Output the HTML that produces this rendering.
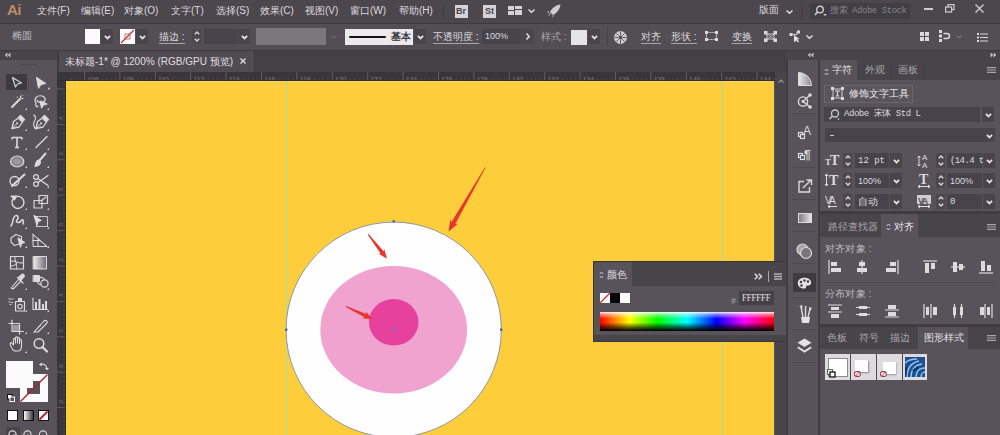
<!DOCTYPE html>
<html><head><meta charset="utf-8">
<style>
*{margin:0;padding:0;box-sizing:border-box}
html,body{width:1000px;height:435px;overflow:hidden;background:#58535a;font-family:"Liberation Sans",sans-serif;color:#dcdadd;position:relative}
.a{position:absolute}
.t{position:absolute;white-space:nowrap;font-size:10px;line-height:10px}
.m{font-family:"Liberation Mono",monospace}
.ul{border-bottom:1px solid #a9a6aa}
.chev{position:absolute;width:12px;height:15px;background:#48444a}
.inp{position:absolute;background:#47434a}
.spin{position:absolute;width:9px;height:15px;background:#4b474d}
svg{position:absolute;overflow:visible}
</style></head><body>
<!-- ================= MENU BAR ================= -->
<div class="a" style="left:0;top:0;width:1000px;height:23px;background:#4b474d"></div>
<div class="a" style="left:0;top:23px;width:1000px;height:1px;background:#3c393e"></div>
<div class="t" style="left:7px;top:2px;font-size:15px;line-height:16px;color:#c08a66;font-weight:bold;letter-spacing:-0.5px">Ai</div>
<div class="t" style="left:37px;top:6px">文件(F)</div>
<div class="t" style="left:81px;top:6px">编辑(E)</div>
<div class="t" style="left:124px;top:6px">对象(O)</div>
<div class="t" style="left:171px;top:6px">文字(T)</div>
<div class="t" style="left:216px;top:6px">选择(S)</div>
<div class="t" style="left:260px;top:6px">效果(C)</div>
<div class="t" style="left:305px;top:6px">视图(V)</div>
<div class="t" style="left:350px;top:6px">窗口(W)</div>
<div class="t" style="left:399px;top:6px">帮助(H)</div>
<div class="a" style="left:443px;top:3px;width:1px;height:17px;background:#433f45"></div>
<div class="a" style="left:455px;top:5px;width:13px;height:13px;background:#d6d3d7"></div>
<div class="t" style="left:456px;top:7px;font-size:9px;line-height:9px;color:#4a464c;font-weight:bold">Br</div>
<div class="a" style="left:483px;top:5px;width:13px;height:13px;background:#d6d3d7"></div>
<div class="t" style="left:485px;top:7px;font-size:9px;line-height:9px;color:#4a464c;font-weight:bold">St</div>
<svg style="left:508px;top:6px" width="15" height="9"><rect x="0" y="0" width="6" height="4" fill="#d6d3d7"/><rect x="0" y="5" width="6" height="4" fill="#d6d3d7"/><rect x="7" y="0" width="7" height="3" fill="#d6d3d7"/><rect x="7" y="4" width="7" height="5" fill="#d6d3d7"/></svg>
<svg style="left:528px;top:9px" width="7" height="4"><path d="M0.5 0.5 L3.5 3.2 L6.5 0.5" stroke="#e0dee1" stroke-width="1.5" fill="none"/></svg>
<svg style="left:547px;top:4px" width="14" height="13"><path d="M13.5 0.5 C9 1 5 4 3 8 L6 11 C10 9 13 5 13.5 0.5Z M2 7 L0 8 L2 9Z M5 12 L6 13 L7 11Z M3 9 L1 12 L4 10Z" fill="#cfccd0"/></svg>
<div class="t" style="left:759px;top:5px">版面</div>
<svg style="left:786px;top:10px" width="7" height="4"><path d="M0.5 0.5 L3.5 3.2 L6.5 0.5" stroke="#e0dee1" stroke-width="1.5" fill="none"/></svg>
<div class="a" style="left:802px;top:3px;width:1px;height:17px;background:#433f45"></div>
<div class="a" style="left:810px;top:3px;width:100px;height:16px;background:#423f44;border-radius:2px"></div>
<svg style="left:814px;top:5px" width="13" height="12"><circle cx="6" cy="4.5" r="3.3" stroke="#cfccd0" stroke-width="1.4" fill="none"/><path d="M3.5 7 L1 10" stroke="#cfccd0" stroke-width="1.6"/><path d="M9 9 L11 11 L13 9Z" fill="#cfccd0"/></svg>
<div class="t m" style="left:830px;top:6px;font-size:9px;line-height:10px;letter-spacing:-0.45px;color:#858287">搜索 Adobe Stock</div>
<div class="a" style="left:924px;top:8px;width:9px;height:2px;background:#d0cdd1"></div>
<svg style="left:945px;top:4px" width="10" height="9"><rect x="3" y="0.6" width="6" height="5" stroke="#d0cdd1" stroke-width="1.2" fill="none"/><rect x="0.6" y="3" width="6" height="5" stroke="#d0cdd1" stroke-width="1.2" fill="#4b474d"/></svg>
<svg style="left:975px;top:4px" width="9" height="9"><path d="M0.5 0.5 L8.5 8.5 M8.5 0.5 L0.5 8.5" stroke="#d0cdd1" stroke-width="1.4"/></svg>

<!-- ================= CONTROL BAR ================= -->
<div class="a" style="left:0;top:24px;width:1000px;height:26px;background:#524e54"></div>
<div class="a" style="left:0;top:50px;width:1000px;height:1px;background:#3d3a3f"></div>

<div class="t" style="left:12px;top:31px;color:#bcb9bd">椭圆</div>
<div class="a" style="left:85px;top:29px;width:15px;height:15px;background:#fbfbfb"></div>
<div class="chev" style="left:101px;top:29px"><svg style="left:2.5px;top:5.5px" width="7" height="5"><path d="M0.9 0.9 L3.5 3.4 L6.1 0.9" stroke="#e4e2e5" stroke-width="1.8" fill="none"/></svg></div>
<div class="a" style="left:120px;top:29px;width:15px;height:15px;background:#fbfbfb"></div>
<svg style="left:120px;top:29px" width="15" height="15"><path d="M1 14 L14 1" stroke="#c0302e" stroke-width="1.3"/><rect x="5" y="5" width="5" height="5" fill="none" stroke="#b25a5a" stroke-width="0.8"/></svg>
<div class="chev" style="left:136px;top:29px"><svg style="left:2.5px;top:5.5px" width="7" height="5"><path d="M0.9 0.9 L3.5 3.4 L6.1 0.9" stroke="#e4e2e5" stroke-width="1.8" fill="none"/></svg></div>
<div class="t ul" style="left:159px;top:32px;padding-bottom:1px">描边 :</div>
<div class="spin" style="left:192px;top:29px"><svg style="left:1.5px;top:2px" width="6" height="11"><path d="M0.8 3.2 L3 1 L5.2 3.2 M0.8 7.8 L3 10 L5.2 7.8" stroke="#d8d6d9" stroke-width="1.5" fill="none"/></svg></div>
<div class="inp" style="left:204px;top:29px;width:33px;height:15px"></div>
<div class="chev" style="left:238px;top:29px"><svg style="left:2.5px;top:5.5px" width="7" height="5"><path d="M0.9 0.9 L3.5 3.4 L6.1 0.9" stroke="#e4e2e5" stroke-width="1.8" fill="none"/></svg></div>
<div class="a" style="left:256px;top:28px;width:70px;height:17px;background:#7b777d"></div>
<svg style="left:330px;top:35px" width="7" height="4"><path d="M0.5 0.5 L3.5 3.2 L6.5 0.5" stroke="#68646a" stroke-width="1.2" fill="none"/></svg>
<div class="a" style="left:345px;top:29px;width:68px;height:15.5px;background:#ebe9ec"></div>
<div class="a" style="left:349px;top:35.5px;width:37px;height:2.6px;background:#111;border-radius:1px"></div>
<div class="t" style="left:391px;top:32px;font-family:'Liberation Serif',serif;color:#3a383b;font-size:9.5px;line-height:10px;font-weight:bold">基本</div>
<div class="chev" style="left:414px;top:29px"><svg style="left:2.5px;top:5.5px" width="7" height="5"><path d="M0.9 0.9 L3.5 3.4 L6.1 0.9" stroke="#e4e2e5" stroke-width="1.8" fill="none"/></svg></div>
<div class="t ul" style="left:433px;top:32px;padding-bottom:1px">不透明度 :</div>
<div class="inp" style="left:482px;top:29px;width:39px;height:15px"></div>
<div class="t" style="left:485px;top:32px;font-size:9px;line-height:9px">100%</div>
<div class="a" style="left:522px;top:29px;width:12px;height:15px;background:#4b474d"></div>
<svg style="left:526px;top:33px" width="4" height="7"><path d="M0.5 0.5 L3.2 3.5 L0.5 6.5" stroke="#e0dee1" stroke-width="1.5" fill="none"/></svg>
<div class="t" style="left:541px;top:32px;color:#a9a6aa">样式 :</div>
<div class="a" style="left:571px;top:30px;width:16px;height:15px;background:#e6e3e8"></div>
<div class="chev" style="left:588px;top:29px"><svg style="left:2.5px;top:5.5px" width="7" height="5"><path d="M0.9 0.9 L3.5 3.4 L6.1 0.9" stroke="#e4e2e5" stroke-width="1.8" fill="none"/></svg></div>
<div class="a" style="left:607px;top:27px;width:1px;height:19px;background:#46434a"></div>
<svg style="left:613px;top:30px" width="15" height="15"><circle cx="7.5" cy="7.5" r="6.5" fill="#cfccd0"/><circle cx="7.5" cy="7.5" r="2" fill="#524e54"/><path d="M7.5 1.5 V5 M7.5 10 V13.5 M1.5 7.5 H5 M10 7.5 H13.5 M3.3 3.3 L5.8 5.8 M9.2 9.2 L11.7 11.7 M11.7 3.3 L9.2 5.8 M5.8 9.2 L3.3 11.7" stroke="#524e54" stroke-width="0.9"/></svg>
<div class="t ul" style="left:641px;top:32px;padding-bottom:1px">对齐</div>
<div class="t ul" style="left:671px;top:32px;padding-bottom:1px">形状 :</div>
<svg style="left:705px;top:31px" width="13" height="10"><rect x="1.5" y="1.5" width="10" height="7" fill="none" stroke="#cfccd0" stroke-width="1.2" stroke-dasharray="2 1"/><rect x="0" y="0" width="3" height="3" fill="#dcdadd"/><rect x="10" y="0" width="3" height="3" fill="#dcdadd"/><rect x="0" y="7" width="3" height="3" fill="#dcdadd"/><rect x="10" y="7" width="3" height="3" fill="#dcdadd"/></svg>
<div class="t ul" style="left:732px;top:32px;padding-bottom:1px">变换</div>
<svg style="left:764px;top:31px" width="13" height="11"><path d="M3 3 L10 8 M10 3 L3 8" stroke="#cfccd0" stroke-width="0.8"/><rect x="3" y="3" width="7" height="5" fill="none" stroke="#cfccd0" stroke-width="1"/><rect x="0" y="0" width="3.5" height="3.5" fill="#dcdadd"/><rect x="9.5" y="0" width="3.5" height="3.5" fill="#dcdadd"/><rect x="0" y="7.5" width="3.5" height="3.5" fill="#dcdadd"/><rect x="9.5" y="7.5" width="3.5" height="3.5" fill="#dcdadd"/></svg>
<svg style="left:789px;top:30px" width="13" height="13"><rect x="0.5" y="3" width="3" height="3" fill="#dcdadd"/><rect x="8" y="0.5" width="3" height="3" fill="#dcdadd"/><path d="M3 4.5 H8 V2" stroke="#cfccd0" stroke-width="1" fill="none"/><path d="M5 5 L5 12.5 L7 10.5 L9 12.5 L10 11.5 L8 9.5 L10.5 9 Z" fill="#e4e2e5"/></svg>
<svg style="left:806px;top:35px" width="7" height="4"><path d="M0.5 0.5 L3.5 3.2 L6.5 0.5" stroke="#e0dee1" stroke-width="1.5" fill="none"/></svg>
<svg style="left:920px;top:32px" width="9" height="9"><rect x="0" y="0" width="4" height="4" fill="#dcdadd"/><rect x="5" y="0" width="4" height="4" fill="#dcdadd"/><rect x="0" y="5" width="4" height="4" fill="#dcdadd"/><rect x="5" y="5" width="4" height="4" fill="#dcdadd"/></svg>
<svg style="left:939px;top:30px" width="12" height="12"><rect x="0" y="0" width="3" height="3" fill="#dcdadd"/><rect x="0" y="4.5" width="3" height="3" fill="#dcdadd"/><rect x="0" y="9" width="3" height="3" fill="#dcdadd"/><path d="M4.5 3.5 H8 A2.5 2.5 0 0 1 8 8.5 H4.5" stroke="#dcdadd" stroke-width="1.4" fill="none"/></svg>
<svg style="left:956px;top:35px" width="6" height="4"><path d="M0.5 0.5 L3 3 L5.5 0.5" stroke="#767278" stroke-width="1.2" fill="none"/></svg>
<svg style="left:977px;top:33px" width="11" height="9"><rect x="0" y="0" width="2" height="2" fill="#dcdadd"/><rect x="0" y="3.5" width="2" height="2" fill="#dcdadd"/><rect x="0" y="7" width="2" height="2" fill="#dcdadd"/><path d="M3 1 H11 M3 4.5 H11 M3 8 H11" stroke="#dcdadd" stroke-width="1.2"/></svg>

<!-- ================= LEFT TOOLBAR ================= -->
<div class="a" style="left:0;top:51px;width:57px;height:9px;background:#47444a"></div>
<svg style="left:5px;top:53px" width="6" height="4"><path d="M2.5 0.5 L0.8 2 L2.5 3.5 M5.5 0.5 L3.8 2 L5.5 3.5" stroke="#d6d4d7" stroke-width="1.3" fill="none"/></svg>
<div class="a" style="left:0;top:60px;width:57px;height:375px;background:#58535a"></div>
<div class="a" style="left:20px;top:64px;width:17px;height:1px;background:#4c484e"></div>
<div class="a" style="left:57px;top:51px;width:2px;height:384px;background:#3f3c41"></div>


<!-- toolbar icons -->
<div class="a" style="left:6px;top:74px;width:21px;height:16px;background:#3e3b40"></div>
<svg style="left:0;top:0" width="57" height="435">
<g fill="none" stroke="#dcdadd" stroke-width="1.1" stroke-linejoin="round" stroke-linecap="round">
<path d="M12.5 77.5 L21.5 83 L17.5 84 L15.5 87 Z"/>
<path d="M36.5 77.5 L45.5 83.5 L41 84.5 L38.5 88 Z" fill="#dcdadd"/>
<!-- magic wand -->
<path d="M12 107 L20 99" stroke-width="2"/>
<path d="M20.5 96 V97.5 M23 98.5 H21.5 M18 98 L17 97 M22.5 95.5 L21.8 96.2" stroke-width="1"/>
<!-- lasso -->
<path d="M36 103 C33 98 38 95 42 96 C46 97 46 101 43 102 C40 103 37 102 37 100 M36 103 C35 106 37 108 38 106" stroke-width="1.2"/>
<path d="M40 101 L47 104 L43.5 105 L41.5 108 Z" fill="#dcdadd"/>
<!-- pen -->
<path d="M12 128.5 L13.5 121.5 L18.5 118 L22.5 122 L19 127 Z" stroke-width="1.3"/>
<path d="M18 117.5 L20.5 115 L25 119.5 L22.5 122 Z" fill="#dcdadd" stroke-width="0.8"/>
<path d="M12 128.5 L16.5 124" stroke-width="1"/><circle cx="17" cy="123.3" r="1" fill="#dcdadd" stroke="none"/>
<!-- curvature pen -->
<path d="M36 129 C33 127 33 123 35 120 C36 118 35 116 34 115" stroke-width="1.1"/>
<path d="M36 128.5 L37.5 121.5 L42.5 118 L46.5 122 L43 127 Z" stroke-width="1.3"/>
<path d="M42 117.5 L44.5 115 L49 119.5 L46.5 122 Z" fill="#dcdadd" stroke-width="0.8"/>
<path d="M36 128.5 L40.5 124" stroke-width="1"/><circle cx="41" cy="123.3" r="1" fill="#dcdadd" stroke="none"/>
<!-- type -->
<path d="M12 137.5 H22 M17 137.5 V147.5 M15 147.5 H19 M12 137.5 V139.5 M22 137.5 V139.5" stroke-width="1.6" stroke-linecap="butt"/>
<!-- line -->
<path d="M36 147.5 L47 136.5" stroke-width="1.3"/>
<!-- ellipse -->
<ellipse cx="17.2" cy="161.5" rx="6.6" ry="5.5" fill="#8c888e" stroke-width="1.2"/>
<ellipse cx="17.2" cy="161.5" rx="3.5" ry="2.5" fill="#9d9a9e" stroke="none"/>
<!-- brush -->
<path d="M45.5 153.5 L39 161" stroke-width="2"/>
<path d="M39 160 C36 160 35.5 163 35 166.5 C38 166 40.5 165 40.5 162 Z" fill="#dcdadd"/>
<!-- shaper -->
<circle cx="14.5" cy="181" r="4.5" stroke-width="1.3"/>
<path d="M12 186 L24.5 174.5" stroke-width="2"/>
<!-- scissors -->
<circle cx="36" cy="177" r="2.4" stroke-width="1.2"/><circle cx="36" cy="184" r="2.4" stroke-width="1.2"/>
<path d="M38 178.5 L48 185.5 M38 182.5 L48 175.5" stroke-width="1.3"/>
<!-- rotate -->
<path d="M13 199 A6 6 0 1 0 17 196.5" stroke-width="1.4"/>
<path d="M11 196 L14.5 200 L16.5 196 Z" fill="#dcdadd"/>
<!-- scale -->
<rect x="34" y="200.5" width="8" height="7.5" stroke-width="1.2"/>
<rect x="39" y="195.5" width="8.5" height="8" stroke-width="1.2"/>
<path d="M42 200 L46 197" stroke-width="1.1"/>
<!-- warp -->
<path d="M11 226 C14 222 12 218 15 216 C18 214 19 218 17 220 C15 222 19 224 21 221 C23 218 24 221 23 224" stroke-width="1.5"/>
<!-- free transform -->
<rect x="36.5" y="216.5" width="11" height="10" stroke-dasharray="1.6 1.2" stroke-width="1.1"/>
<path d="M34 215.5 L41 220.5 L38 221.5 L37 225 Z" fill="#dcdadd"/>
<!-- shape builder -->
<path d="M11 238 L16 234.5 L21.5 236.5 V243 L14.5 245.5 L11 242 Z" stroke-width="1.1"/>
<path d="M18 238 L24.5 242.5 L21.5 243.5 L20.5 247 Z" fill="#dcdadd"/>
<!-- perspective grid -->
<path d="M33 234.5 V246.5 H47 L33 234.5 M33 240.5 H40 M38 238.5 V246.5 M33 234.5 L47 246.5" stroke-width="1"/>
<!-- mesh -->
<rect x="10.5" y="256.5" width="13" height="12.5" stroke-width="1.2"/>
<path d="M10.5 261 C15 260 18 264 23.5 263 M15 256.5 C14 261 18 264 16.5 269 M10.5 266 C14 266 16 265 17 263" stroke-width="1"/>
<!-- gradient -->
<defs><linearGradient id="tg" x1="0" x2="1"><stop offset="0" stop-color="#eeeeee"/><stop offset="1" stop-color="#6a666c"/></linearGradient></defs>
<rect x="33.5" y="256.5" width="13" height="12.5" fill="url(#tg)" stroke="#dcdadd" stroke-width="1"/>
<!-- eyedropper -->
<path d="M11 288 L19 279 L21 281 L13 289 Z" stroke-width="1.1"/>
<path d="M19 277 L22 274.5 C23 273.5 25 275.5 24 276.5 L21.5 279.5 Z M17.5 277.5 L23 283" fill="#dcdadd" stroke-width="1.3"/>
<!-- blend -->
<rect x="33.5" y="275.5" width="6" height="6" fill="#dcdadd" stroke-width="1"/>
<circle cx="41" cy="281" r="3.6" stroke-width="1.1"/>
<circle cx="44.5" cy="283.5" r="3.6" fill="#58535a" stroke-width="1.2"/>
<!-- symbol sprayer -->
<rect x="15.5" y="301.5" width="9" height="9.5" stroke-width="1.2"/>
<circle cx="20" cy="306.5" r="2.2" stroke-width="1.1"/>
<rect x="18" y="298" width="4" height="3" fill="#dcdadd" stroke="none"/>
<path d="M9 299 H10.5 M12 299 H13 M9 302 H10 M11.5 302.5 H12.5 M10 304.5 H11" stroke-width="1"/>
<!-- graph -->
<path d="M33 298 V309.5 H47.5" stroke-width="1.1"/>
<rect x="35" y="302" width="2" height="7" fill="#dcdadd" stroke="none"/>
<rect x="38.5" y="299" width="2" height="10" fill="#dcdadd" stroke="none"/>
<rect x="42" y="304" width="2" height="5" fill="#dcdadd" stroke="none"/>
<rect x="45" y="301" width="2" height="8" fill="#dcdadd" stroke="none"/>
<!-- artboard -->
<path d="M12 320 V331.5 H23.5 M9 323.5 H19.5 V334" stroke-width="1.2"/>
<path d="M13 325 H19 V331 H13Z" fill="#9d9a9e" stroke="none"/>
<!-- slice -->
<path d="M34 332 L44 321 C45.5 319.5 48 321 47 323 L38 332 Z" stroke-width="1.1"/>
<path d="M34 332 L40.5 325.5" stroke-width="1"/>
<!-- hand -->
<path d="M13 350 C11 347 9.5 344 10.5 343 C11.5 342 12.5 343.5 13.5 345 V339.5 C13.5 338 15.5 338 15.5 339.5 V343 V338 C15.5 336.5 17.5 336.5 17.5 338 V343 V338.5 C17.5 337 19.5 337 19.5 338.5 V343.5 V340.5 C19.5 339 21.5 339 21.5 340.5 V346 C21.5 349 20 351 17.5 351 H15 Z" fill="none" stroke-width="1.1"/>
<!-- zoom -->
<circle cx="39" cy="343.5" r="4.8" stroke-width="1.5"/>
<path d="M42.5 347 L47 351.5" stroke-width="2.2"/>
</g>
<g fill="#dcdadd">
<circle cx="49" cy="88.5" r="0.9"/>
<path d="M25 110 L27 110 L27 108Z"/><path d="M47 110 L49 110 L49 108Z"/>
<path d="M25 131 L27 131 L27 129Z"/><path d="M47 131 L49 131 L49 129Z"/>
<path d="M25 150 L27 150 L27 148Z"/><path d="M47 150 L49 150 L49 148Z"/>
<path d="M25 168 L27 168 L27 166Z"/><path d="M47 168 L49 168 L49 166Z"/>
<path d="M25 188 L27 188 L27 186Z"/><path d="M47 188 L49 188 L49 186Z"/>
<path d="M25 210 L27 210 L27 208Z"/><path d="M47 210 L49 210 L49 208Z"/>
<path d="M25 229 L27 229 L27 227Z"/><path d="M47 229 L49 229 L49 227Z"/>
<path d="M25 248 L27 248 L27 246Z"/><path d="M47 248 L49 248 L49 246Z"/>
<path d="M25 290 L27 290 L27 288Z"/><path d="M47 290 L49 290 L49 288Z"/>
<path d="M25 312 L27 312 L27 310Z"/><path d="M47 312 L49 312 L49 310Z"/>
<path d="M25 334 L27 334 L27 332Z"/><path d="M47 334 L49 334 L49 332Z"/>
<path d="M25 353 L27 353 L27 351Z"/>
</g>
</svg>
<!-- fill/stroke -->
<div class="a" style="left:20px;top:374px;width:28px;height:28px;background:#fbfbfb"></div>
<div class="a" style="left:27px;top:381px;width:13px;height:13px;background:#58535a"></div>
<svg style="left:20px;top:374px" width="28" height="28"><path d="M0.5 27.5 L27.5 0.5" stroke="#a82a2e" stroke-width="1.5"/></svg>
<div class="a" style="left:6px;top:361px;width:27px;height:27px;background:#fbfbfb"></div>
<svg style="left:39px;top:362px" width="10" height="9"><path d="M1.5 2.5 C5 1.5 7.5 3 8 7" stroke="#dcdadd" stroke-width="1.2" fill="none"/><path d="M0 2.5 L2.5 0.5 L2.5 4.5Z M6 6 L8 8.5 L10 6Z" fill="#dcdadd"/></svg>
<svg style="left:7px;top:394px" width="8" height="8"><rect x="0.5" y="0.5" width="4.5" height="4.5" fill="#fbfbfb" stroke="#111" stroke-width="1"/><rect x="3" y="3" width="4.5" height="4.5" fill="#58535a" stroke="#fbfbfb" stroke-width="1"/></svg>
<div class="a" style="left:7px;top:410px;width:11px;height:11px;background:#fbfbfb;border:1.6px solid #141414"></div>
<div class="a" style="left:23px;top:410px;width:10.5px;height:11px;background:linear-gradient(to right,#fafafa,#3a383b);border:1.6px solid #141414"></div>
<div class="a" style="left:38px;top:410px;width:10.5px;height:11px;background:#fbfbfb;border:1.6px solid #141414"></div>
<svg style="left:39px;top:411px" width="9" height="9"><path d="M0.5 8.5 L8.5 0.5" stroke="#b0202a" stroke-width="1.8"/></svg>
<div class="a" style="left:6px;top:427px;width:14px;height:8px;background:#48454b"></div>
<svg style="left:0;top:426px" width="57" height="9"><g fill="none" stroke="#dcdadd" stroke-width="1.1"><circle cx="12.5" cy="8.5" r="3.6"/><circle cx="27.5" cy="8.5" r="3.6"/><circle cx="43" cy="8.5" r="3.6"/><path d="M13 9 L16 9 L16 12"/><path d="M27.5 8.5 L30.5 11"/></g></svg>
<!-- ================= DOC TAB / RULERS / CANVAS ================= -->
<div class="a" style="left:59px;top:51px;width:729px;height:21px;background:#444146"></div>
<div class="a" style="left:59px;top:51px;width:194px;height:21px;background:#504c52"></div><div class="a" style="left:252px;top:51px;width:1px;height:21px;background:#5a565c"></div>
<div class="t" style="left:65px;top:57px;font-size:10px;color:#e0dee1">未标题-1* @ 1200% (RGB/GPU 预览)</div>
<svg style="left:240px;top:58px" width="6" height="6"><path d="M0.5 0.5 L5.5 5.5 M5.5 0.5 L0.5 5.5" stroke="#e0dee1" stroke-width="1.3"/></svg>
<div class="a" style="left:59px;top:72px;width:716px;height:9px;background:#39363b"></div>
<div class="a" style="left:57px;top:72px;width:9px;height:363px;background:#39363b"></div>
<svg style="left:0;top:0" width="780" height="435"><g stroke="#5f5b62" stroke-width="1"><path d="M84.5 72 V80"/><path d="M119.9 72 V80"/><path d="M155.3 72 V80"/><path d="M190.7 72 V80"/><path d="M226.1 72 V80"/><path d="M261.5 72 V80"/><path d="M296.9 72 V80"/><path d="M332.3 72 V80"/><path d="M367.7 72 V80"/><path d="M403.1 72 V80"/><path d="M438.5 72 V80"/><path d="M473.9 72 V80"/><path d="M509.3 72 V80"/><path d="M544.7 72 V80"/><path d="M580.1 72 V80"/><path d="M615.5 72 V80"/><path d="M650.9 72 V80"/><path d="M686.3 72 V80"/><path d="M721.7 72 V80"/><path d="M757.1 72 V80"/><path d="M57 89.0 H65"/><path d="M57 124.4 H65"/><path d="M57 159.8 H65"/><path d="M57 195.2 H65"/><path d="M57 230.6 H65"/><path d="M57 266.0 H65"/><path d="M57 301.4 H65"/><path d="M57 336.8 H65"/><path d="M57 372.2 H65"/><path d="M57 407.6 H65"/></g><g stroke="#4d4a50" stroke-width="1"><path d="M71.2 78 V80"/><path d="M75.7 78 V80"/><path d="M80.1 78 V80"/><path d="M88.9 78 V80"/><path d="M93.3 78 V80"/><path d="M97.8 78 V80"/><path d="M102.2 78 V80"/><path d="M106.6 78 V80"/><path d="M111.0 78 V80"/><path d="M115.5 78 V80"/><path d="M124.3 78 V80"/><path d="M128.8 78 V80"/><path d="M133.2 78 V80"/><path d="M137.6 78 V80"/><path d="M142.0 78 V80"/><path d="M146.4 78 V80"/><path d="M150.9 78 V80"/><path d="M159.7 78 V80"/><path d="M164.2 78 V80"/><path d="M168.6 78 V80"/><path d="M173.0 78 V80"/><path d="M177.4 78 V80"/><path d="M181.9 78 V80"/><path d="M186.3 78 V80"/><path d="M195.1 78 V80"/><path d="M199.6 78 V80"/><path d="M204.0 78 V80"/><path d="M208.4 78 V80"/><path d="M212.8 78 V80"/><path d="M217.2 78 V80"/><path d="M221.7 78 V80"/><path d="M230.5 78 V80"/><path d="M235.0 78 V80"/><path d="M239.4 78 V80"/><path d="M243.8 78 V80"/><path d="M248.2 78 V80"/><path d="M252.7 78 V80"/><path d="M257.1 78 V80"/><path d="M265.9 78 V80"/><path d="M270.4 78 V80"/><path d="M274.8 78 V80"/><path d="M279.2 78 V80"/><path d="M283.6 78 V80"/><path d="M288.1 78 V80"/><path d="M292.5 78 V80"/><path d="M301.3 78 V80"/><path d="M305.8 78 V80"/><path d="M310.2 78 V80"/><path d="M314.6 78 V80"/><path d="M319.0 78 V80"/><path d="M323.4 78 V80"/><path d="M327.9 78 V80"/><path d="M336.7 78 V80"/><path d="M341.1 78 V80"/><path d="M345.6 78 V80"/><path d="M350.0 78 V80"/><path d="M354.4 78 V80"/><path d="M358.8 78 V80"/><path d="M363.3 78 V80"/><path d="M372.1 78 V80"/><path d="M376.5 78 V80"/><path d="M381.0 78 V80"/><path d="M385.4 78 V80"/><path d="M389.8 78 V80"/><path d="M394.2 78 V80"/><path d="M398.7 78 V80"/><path d="M407.5 78 V80"/><path d="M411.9 78 V80"/><path d="M416.4 78 V80"/><path d="M420.8 78 V80"/><path d="M425.2 78 V80"/><path d="M429.6 78 V80"/><path d="M434.1 78 V80"/><path d="M442.9 78 V80"/><path d="M447.3 78 V80"/><path d="M451.8 78 V80"/><path d="M456.2 78 V80"/><path d="M460.6 78 V80"/><path d="M465.0 78 V80"/><path d="M469.5 78 V80"/><path d="M478.3 78 V80"/><path d="M482.7 78 V80"/><path d="M487.2 78 V80"/><path d="M491.6 78 V80"/><path d="M496.0 78 V80"/><path d="M500.4 78 V80"/><path d="M504.9 78 V80"/><path d="M513.7 78 V80"/><path d="M518.1 78 V80"/><path d="M522.6 78 V80"/><path d="M527.0 78 V80"/><path d="M531.4 78 V80"/><path d="M535.8 78 V80"/><path d="M540.3 78 V80"/><path d="M549.1 78 V80"/><path d="M553.5 78 V80"/><path d="M558.0 78 V80"/><path d="M562.4 78 V80"/><path d="M566.8 78 V80"/><path d="M571.2 78 V80"/><path d="M575.7 78 V80"/><path d="M584.5 78 V80"/><path d="M588.9 78 V80"/><path d="M593.4 78 V80"/><path d="M597.8 78 V80"/><path d="M602.2 78 V80"/><path d="M606.6 78 V80"/><path d="M611.1 78 V80"/><path d="M619.9 78 V80"/><path d="M624.3 78 V80"/><path d="M628.8 78 V80"/><path d="M633.2 78 V80"/><path d="M637.6 78 V80"/><path d="M642.0 78 V80"/><path d="M646.5 78 V80"/><path d="M655.3 78 V80"/><path d="M659.7 78 V80"/><path d="M664.2 78 V80"/><path d="M668.6 78 V80"/><path d="M673.0 78 V80"/><path d="M677.4 78 V80"/><path d="M681.9 78 V80"/><path d="M690.7 78 V80"/><path d="M695.1 78 V80"/><path d="M699.6 78 V80"/><path d="M704.0 78 V80"/><path d="M708.4 78 V80"/><path d="M712.8 78 V80"/><path d="M717.3 78 V80"/><path d="M726.1 78 V80"/><path d="M730.5 78 V80"/><path d="M735.0 78 V80"/><path d="M739.4 78 V80"/><path d="M743.8 78 V80"/><path d="M748.2 78 V80"/><path d="M752.7 78 V80"/><path d="M761.5 78 V80"/><path d="M765.9 78 V80"/><path d="M770.4 78 V80"/><path d="M774.8 78 V80"/><path d="M63 84.6 H65"/><path d="M63 93.4 H65"/><path d="M63 97.8 H65"/><path d="M63 102.3 H65"/><path d="M63 106.7 H65"/><path d="M63 111.1 H65"/><path d="M63 115.5 H65"/><path d="M63 120.0 H65"/><path d="M63 128.8 H65"/><path d="M63 133.2 H65"/><path d="M63 137.7 H65"/><path d="M63 142.1 H65"/><path d="M63 146.5 H65"/><path d="M63 150.9 H65"/><path d="M63 155.4 H65"/><path d="M63 164.2 H65"/><path d="M63 168.7 H65"/><path d="M63 173.1 H65"/><path d="M63 177.5 H65"/><path d="M63 181.9 H65"/><path d="M63 186.4 H65"/><path d="M63 190.8 H65"/><path d="M63 199.6 H65"/><path d="M63 204.1 H65"/><path d="M63 208.5 H65"/><path d="M63 212.9 H65"/><path d="M63 217.3 H65"/><path d="M63 221.8 H65"/><path d="M63 226.2 H65"/><path d="M63 235.0 H65"/><path d="M63 239.5 H65"/><path d="M63 243.9 H65"/><path d="M63 248.3 H65"/><path d="M63 252.7 H65"/><path d="M63 257.2 H65"/><path d="M63 261.6 H65"/><path d="M63 270.4 H65"/><path d="M63 274.9 H65"/><path d="M63 279.3 H65"/><path d="M63 283.7 H65"/><path d="M63 288.1 H65"/><path d="M63 292.6 H65"/><path d="M63 297.0 H65"/><path d="M63 305.8 H65"/><path d="M63 310.2 H65"/><path d="M63 314.7 H65"/><path d="M63 319.1 H65"/><path d="M63 323.5 H65"/><path d="M63 327.9 H65"/><path d="M63 332.4 H65"/><path d="M63 341.2 H65"/><path d="M63 345.6 H65"/><path d="M63 350.1 H65"/><path d="M63 354.5 H65"/><path d="M63 358.9 H65"/><path d="M63 363.3 H65"/><path d="M63 367.8 H65"/><path d="M63 376.6 H65"/><path d="M63 381.0 H65"/><path d="M63 385.5 H65"/><path d="M63 389.9 H65"/><path d="M63 394.3 H65"/><path d="M63 398.7 H65"/><path d="M63 403.2 H65"/><path d="M63 412.0 H65"/><path d="M63 416.4 H65"/><path d="M63 420.9 H65"/><path d="M63 425.3 H65"/><path d="M63 429.7 H65"/><path d="M63 434.1 H65"/><path d="M63 438.6 H65"/></g><g font-family="Liberation Sans" font-size="6" fill="#78757b"><text transform="translate(62.5 120.0) rotate(-90)">4</text><text transform="translate(62.5 155.4) rotate(-90)">6</text><text transform="translate(62.5 190.8) rotate(-90)">8</text><text transform="translate(62.5 226.2) rotate(-90)">0</text><text transform="translate(62.5 261.6) rotate(-90)">2</text><text transform="translate(62.5 297.0) rotate(-90)">4</text><text transform="translate(62.5 332.4) rotate(-90)">6</text><text transform="translate(62.5 367.8) rotate(-90)">8</text><text transform="translate(62.5 403.2) rotate(-90)">0</text></g><g font-family="Liberation Sans" font-size="6.5" fill="#78757b"><text x="87.5" y="82">106</text><text x="122.9" y="82">108</text><text x="158.3" y="82">110</text><text x="193.7" y="82">112</text><text x="229.1" y="82">114</text><text x="264.5" y="82">116</text><text x="299.9" y="82">118</text><text x="335.3" y="82">120</text><text x="370.7" y="82">122</text><text x="406.1" y="82">124</text><text x="441.5" y="82">126</text><text x="476.9" y="82">128</text><text x="512.3" y="82">130</text><text x="547.7" y="82">132</text><text x="583.1" y="82">134</text><text x="618.5" y="82">136</text><text x="653.9" y="82">138</text><text x="689.3" y="82">140</text><text x="724.7" y="82">142</text><text x="760.1" y="82">144</text></g><path d="M57 80.5 H775 M65.5 81 V435" stroke="#2f2c31" stroke-width="1"/></svg>
<div class="a" style="left:66px;top:81px;width:708px;height:354px;background:#fecd3c"></div>
<div class="a" style="left:66px;top:81px;width:708px;height:1px;background:#fed866"></div><div class="a" style="left:66px;top:86px;width:708px;height:1px;background:repeating-linear-gradient(to right,#fed66c 0 2px,transparent 2px 5px)"></div>
<div class="a" style="left:286px;top:81px;width:2px;height:354px;background:#cfd672"></div>
<div class="a" style="left:721px;top:81px;width:2px;height:354px;background:#cfd672"></div>

<!-- ================= ARTWORK ================= -->
<svg style="left:0;top:0" width="1000" height="435">
<circle cx="393.7" cy="329.7" r="107.6" fill="#fefefe" stroke="#7f8fa8" stroke-width="0.9"/>
<ellipse cx="393.7" cy="329.7" rx="73.4" ry="63.8" fill="#f1a3cf"/>
<ellipse cx="393.7" cy="322.2" rx="24.8" ry="23.3" fill="#e6419d"/>
<rect x="392.5" y="220.2" width="2.4" height="2.4" fill="#4a67a0"/>
<rect x="285" y="328.5" width="2.4" height="2.4" fill="#4a67a0"/>
<rect x="500" y="328.5" width="2.4" height="2.4" fill="#4a67a0"/>
<rect x="392.4" y="328.4" width="2.6" height="2.6" fill="#7a78c8"/>
<g fill="#e8352e">
<path d="M485.0 167.2 L451.5 221.9 L450.4 219.6 L448.4 231.7 L457.8 223.8 L455.3 224.1 L485.6 167.6Z"/>
<path d="M367.8 234.7 L380.6 253.5 L378.2 253.5 L387.0 258.7 L384.2 248.9 L383.6 251.2 L368.6 234.1Z"/>
<path d="M345.8 307.1 L364.5 317.3 L362.4 318.4 L372.6 319.0 L365.6 311.6 L366.2 313.9 L346.2 306.1Z"/>
</g>
</svg>
<!-- scrollbar -->
<div class="a" style="left:775px;top:72px;width:13px;height:363px;background:#47444a"></div>
<svg style="left:778px;top:79px" width="6" height="4"><path d="M0.5 3.5 L3 1 L5.5 3.5" stroke="#9d9a9e" stroke-width="1.1" fill="none"/></svg>

<!-- =
<!-- ================= COLOR PANEL ================= -->
<div class="a" style="left:593px;top:261px;width:194px;height:81px;background:#3a373c"></div><div class="a" style="left:594px;top:335px;width:192px;height:6px;background:#47444a"></div>
<div class="a" style="left:594px;top:262px;width:192px;height:24px;background:#47444a"></div>
<div class="a" style="left:594px;top:262px;width:38px;height:24px;background:#58535a"></div>
<svg style="left:599px;top:271px" width="5" height="8"><path d="M0.8 3 L2.5 1 L4.2 3 M0.8 5 L2.5 7 L4.2 5" stroke="#cfccd0" stroke-width="1" fill="none"/></svg>
<div class="t" style="left:607px;top:270px;font-size:10px;color:#e0dee1">颜色</div>
<svg style="left:754px;top:273px" width="9" height="7"><path d="M0.7 0.7 L3.5 3.5 L0.7 6.3 M4.7 0.7 L7.5 3.5 L4.7 6.3" stroke="#dcdadd" stroke-width="1.5" fill="none"/></svg>
<div class="a" style="left:768px;top:271px;width:1px;height:11px;background:#a9a6aa"></div>
<svg style="left:774px;top:273px" width="8" height="7"><path d="M0 1 H8 M0 3.5 H8 M0 6 H8" stroke="#b3b0b4" stroke-width="1.3"/></svg>
<div class="a" style="left:594px;top:286px;width:192px;height:49px;background:#58535a"></div>
<div class="a" style="left:600px;top:293px;width:10px;height:10px;background:#fafafa"></div>
<svg style="left:600px;top:293px" width="10" height="10"><path d="M0 10 L10 0" stroke="#c8302e" stroke-width="1.2"/></svg>
<div class="a" style="left:610px;top:293px;width:10px;height:10px;background:#050505"></div>
<div class="a" style="left:620px;top:293px;width:10px;height:10px;background:#fafafa"></div>
<div class="t" style="left:731px;top:296px;font-size:9px;color:#a9a6aa">#</div>
<div class="inp" style="left:739px;top:291px;width:35px;height:14px;background:#454147"></div>
<div class="t" style="left:742px;top:291px;font-family:'Liberation Serif',serif;font-size:11px;line-height:12px;color:#e6e4e7;transform:scaleX(0.78);transform-origin:0 0">FFFFFF</div>
<div class="a" style="left:600px;top:312px;width:174px;height:19px;background:linear-gradient(to right,#ff0000,#ffff00 17%,#00ff00 33%,#00ffff 50%,#0000ff 67%,#ff00ff 83%,#ff0000)"></div>
<div class="a" style="left:600px;top:312px;width:174px;height:19px;background:linear-gradient(to bottom,rgba(255,255,255,0.95),rgba(255,255,255,0.5) 12%,rgba(255,255,255,0) 35%,rgba(0,0,0,0) 55%,rgba(0,0,0,0.6) 80%,rgba(0,0,0,1))"></div>
================ RIGHT PANELS ================= -->
<div class="a" style="left:786px;top:51px;width:214px;height:9px;background:#47444a"></div>
<svg style="left:808px;top:53px" width="6" height="4"><path d="M2.5 0.5 L0.8 2 L2.5 3.5 M5.5 0.5 L3.8 2 L5.5 3.5" stroke="#d6d4d7" stroke-width="1.3" fill="none"/></svg>
<svg style="left:990px;top:53px" width="6" height="4"><path d="M0.5 0.5 L2.2 2 L0.5 3.5 M3.5 0.5 L5.2 2 L3.5 3.5" stroke="#d6d4d7" stroke-width="1.3" fill="none"/></svg>
<div class="a" style="left:786px;top:60px;width:2px;height:375px;background:#3f3c41"></div>
<div class="a" style="left:788px;top:60px;width:30px;height:375px;background:#58535a"></div>
<div class="a" style="left:818px;top:60px;width:2px;height:375px;background:#3f3c41"></div>
<div class="a" style="left:820px;top:60px;width:180px;height:375px;background:#58535a"></div>

<!-- 字符 panel -->
<div class="a" style="left:820px;top:60px;width:180px;height:20px;background:#47444a"></div>
<div class="a" style="left:820px;top:60px;width:37px;height:20px;background:#58535a"></div>
<svg style="left:824px;top:68px" width="5" height="8"><path d="M0.8 3 L2.5 1 L4.2 3 M0.8 5 L2.5 7 L4.2 5" stroke="#cfccd0" stroke-width="1" fill="none"/></svg>
<div class="t" style="left:832px;top:65px;color:#e4e2e5">字符</div>
<div class="t" style="left:865px;top:65px;color:#a9a6aa">外观</div>
<div class="a" style="left:891px;top:62px;width:1px;height:17px;background:#424045"></div>
<div class="t" style="left:898px;top:65px;color:#a9a6aa">画板</div>
<div class="a" style="left:922px;top:62px;width:1px;height:17px;background:#424045"></div>
<svg style="left:987px;top:67px" width="9" height="6"><path d="M0 0.7 H9 M0 3 H9 M0 5.3 H9" stroke="#a9a6aa" stroke-width="1.2"/></svg>
<div class="a" style="left:824px;top:85px;width:89px;height:18px;border:1px solid #6a666c;background:#5a555c"></div>
<svg style="left:831px;top:87px" width="13" height="13"><rect x="2" y="2" width="9" height="9" fill="none" stroke="#cfccd0" stroke-width="1"/><rect x="0" y="0" width="3" height="3" fill="#dcdadd"/><rect x="10" y="0" width="3" height="3" fill="#dcdadd"/><rect x="0" y="10" width="3" height="3" fill="#dcdadd"/><rect x="10" y="10" width="3" height="3" fill="#dcdadd"/><path d="M4 4 H9 M6.5 4 V9 M5 9 H8" stroke="#dcdadd" stroke-width="1.2"/></svg>
<div class="t" style="left:849px;top:89px;font-size:9.5px;line-height:10px;color:#ececee">修饰文字工具</div>
<div class="inp" style="left:824px;top:107px;width:156px;height:15px"></div>
<svg style="left:827px;top:109px" width="14" height="12"><circle cx="8" cy="4.5" r="3.5" stroke="#cfccd0" stroke-width="1.3" fill="none"/><path d="M5.5 7 L2.5 10" stroke="#cfccd0" stroke-width="1.5"/><path d="M10 9.5 L11.5 11 L13 9.5Z" fill="#cfccd0"/></svg>
<div class="t m" style="left:844px;top:110px;font-size:9px;line-height:9px;letter-spacing:-0.45px;color:#dcdadd">Adobe 宋体 Std L</div>
<div class="chev" style="left:982px;top:107px"><svg style="left:2.5px;top:5.5px" width="7" height="5"><path d="M0.9 0.9 L3.5 3.4 L6.1 0.9" stroke="#e4e2e5" stroke-width="1.8" fill="none"/></svg></div>
<div class="inp" style="left:825px;top:128px;width:158px;height:14px"></div>
<div class="a" style="left:830px;top:135px;width:4px;height:1px;background:#cfccd0"></div>
<div class="chev" style="left:983px;top:128px;height:14px"><svg style="left:2.5px;top:5.5px" width="7" height="5"><path d="M0.9 0.9 L3.5 3.4 L6.1 0.9" stroke="#e4e2e5" stroke-width="1.8" fill="none"/></svg></div>
<svg style="left:825px;top:153px" width="15" height="13"><text x="0" y="12" font-family="Liberation Serif" font-size="9" font-weight="bold" fill="#dcdadd">T</text><text x="5" y="12" font-family="Liberation Serif" font-size="14" font-weight="bold" fill="#dcdadd">T</text></svg><div class="spin" style="left:843px;top:153px"><svg style="left:1.5px;top:2px" width="6" height="11"><path d="M0.8 3.2 L3 1 L5.2 3.2 M0.8 7.8 L3 10 L5.2 7.8" stroke="#d8d6d9" stroke-width="1.5" fill="none"/></svg></div><div class="inp" style="left:855px;top:153px;width:34px;height:15px"></div><div class="t m" style="left:858px;top:157px;font-size:9px;line-height:9px">12 pt</div><div class="chev" style="left:890px;top:153px"><svg style="left:2.5px;top:5.5px" width="7" height="5"><path d="M0.9 0.9 L3.5 3.4 L6.1 0.9" stroke="#e4e2e5" stroke-width="1.8" fill="none"/></svg></div><svg style="left:917px;top:153px" width="14" height="15"><text x="5" y="7" font-family="Liberation Sans" font-size="8" fill="#dcdadd">A</text><text x="5" y="15" font-family="Liberation Sans" font-size="8" fill="#dcdadd">A</text><path d="M2 3 V13 M0.5 4.5 L2 3 L3.5 4.5 M0.5 11.5 L2 13 L3.5 11.5" stroke="#dcdadd" stroke-width="1" fill="none"/></svg><div class="spin" style="left:936px;top:153px"><svg style="left:1.5px;top:2px" width="6" height="11"><path d="M0.8 3.2 L3 1 L5.2 3.2 M0.8 7.8 L3 10 L5.2 7.8" stroke="#d8d6d9" stroke-width="1.5" fill="none"/></svg></div><div class="inp" style="left:947px;top:153px;width:35px;height:15px"></div><div class="t m" style="left:950px;top:157px;font-size:9px;line-height:9px;letter-spacing:-0.6px">(14.4 t</div><div class="chev" style="left:983px;top:153px"><svg style="left:2.5px;top:5.5px" width="7" height="5"><path d="M0.9 0.9 L3.5 3.4 L6.1 0.9" stroke="#e4e2e5" stroke-width="1.8" fill="none"/></svg></div><svg style="left:825px;top:173px" width="15" height="14"><path d="M1.5 1 V13 M0 3 L1.5 1 L3 3 M0 11 L1.5 13 L3 11" stroke="#dcdadd" stroke-width="1" fill="none"/><text x="4" y="12" font-family="Liberation Serif" font-size="14" font-weight="bold" fill="#dcdadd">T</text></svg><div class="spin" style="left:843px;top:173px"><svg style="left:1.5px;top:2px" width="6" height="11"><path d="M0.8 3.2 L3 1 L5.2 3.2 M0.8 7.8 L3 10 L5.2 7.8" stroke="#d8d6d9" stroke-width="1.5" fill="none"/></svg></div><div class="inp" style="left:855px;top:173px;width:34px;height:15px"></div><div class="t" style="left:858px;top:177px;font-size:9px;line-height:9px">100%</div><div class="chev" style="left:890px;top:173px"><svg style="left:2.5px;top:5.5px" width="7" height="5"><path d="M0.9 0.9 L3.5 3.4 L6.1 0.9" stroke="#e4e2e5" stroke-width="1.8" fill="none"/></svg></div><svg style="left:917px;top:173px" width="14" height="15"><text x="2" y="11" font-family="Liberation Serif" font-size="14" font-weight="bold" fill="#dcdadd">T</text><path d="M1 13.5 H13 M1 13.5 L3 12 M1 13.5 L3 15 M13 13.5 L11 12 M13 13.5 L11 15" stroke="#dcdadd" stroke-width="1" fill="none"/></svg><div class="spin" style="left:936px;top:173px"><svg style="left:1.5px;top:2px" width="6" height="11"><path d="M0.8 3.2 L3 1 L5.2 3.2 M0.8 7.8 L3 10 L5.2 7.8" stroke="#d8d6d9" stroke-width="1.5" fill="none"/></svg></div><div class="inp" style="left:947px;top:173px;width:35px;height:15px"></div><div class="t" style="left:950px;top:177px;font-size:9px;line-height:9px">100%</div><div class="chev" style="left:983px;top:173px"><svg style="left:2.5px;top:5.5px" width="7" height="5"><path d="M0.9 0.9 L3.5 3.4 L6.1 0.9" stroke="#e4e2e5" stroke-width="1.8" fill="none"/></svg></div><svg style="left:825px;top:194px" width="15" height="14"><text x="0" y="10" font-family="Liberation Sans" font-size="10" fill="#dcdadd" letter-spacing="-2">VA</text><path d="M3 12.5 H12 M3 12.5 L5 11 M3 12.5 L5 14" stroke="#dcdadd" stroke-width="1" fill="none"/></svg><div class="spin" style="left:843px;top:194px"><svg style="left:1.5px;top:2px" width="6" height="11"><path d="M0.8 3.2 L3 1 L5.2 3.2 M0.8 7.8 L3 10 L5.2 7.8" stroke="#d8d6d9" stroke-width="1.5" fill="none"/></svg></div><div class="inp" style="left:855px;top:194px;width:34px;height:15px"></div><div class="t" style="left:858px;top:197px;font-size:10px">自动</div><div class="chev" style="left:890px;top:194px"><svg style="left:2.5px;top:5.5px" width="7" height="5"><path d="M0.9 0.9 L3.5 3.4 L6.1 0.9" stroke="#e4e2e5" stroke-width="1.8" fill="none"/></svg></div><svg style="left:917px;top:194px" width="14" height="15"><rect x="0" y="1" width="14" height="9" fill="#cfccd0"/><text x="1" y="9.5" font-family="Liberation Sans" font-size="9" font-weight="bold" fill="#58535a" letter-spacing="-1.5">VA</text><path d="M1 12.5 H13 M1 12.5 L3 11 M1 12.5 L3 14 M13 12.5 L11 11 M13 12.5 L11 14" stroke="#dcdadd" stroke-width="1" fill="none"/></svg><div class="spin" style="left:936px;top:194px"><svg style="left:1.5px;top:2px" width="6" height="11"><path d="M0.8 3.2 L3 1 L5.2 3.2 M0.8 7.8 L3 10 L5.2 7.8" stroke="#d8d6d9" stroke-width="1.5" fill="none"/></svg></div><div class="inp" style="left:947px;top:194px;width:35px;height:15px"></div><div class="t m" style="left:950px;top:198px;font-size:9px;line-height:9px">0</div><div class="chev" style="left:983px;top:194px"><svg style="left:2.5px;top:5.5px" width="7" height="5"><path d="M0.9 0.9 L3.5 3.4 L6.1 0.9" stroke="#e4e2e5" stroke-width="1.8" fill="none"/></svg></div>
<div class="a" style="left:820px;top:211px;width:180px;height:3px;background:#3f3c41"></div>
<!-- 对齐 panel -->
<div class="a" style="left:820px;top:214px;width:180px;height:23px;background:#47444a"></div>
<div class="t" style="left:828px;top:222px;color:#a9a6aa">路径查找器</div>
<div class="a" style="left:881px;top:214px;width:37px;height:23px;background:#58535a"></div>
<svg style="left:886px;top:223px" width="5" height="8"><path d="M0.8 3 L2.5 1 L4.2 3 M0.8 5 L2.5 7 L4.2 5" stroke="#cfccd0" stroke-width="1" fill="none"/></svg>
<div class="t" style="left:894px;top:222px;color:#e4e2e5">对齐</div>
<svg style="left:987px;top:224px" width="9" height="6"><path d="M0 0.7 H9 M0 3 H9 M0 5.3 H9" stroke="#a9a6aa" stroke-width="1.2"/></svg>
<div class="t" style="left:825px;top:244px;font-size:10px;color:#bcb9bd;letter-spacing:0.2px">对齐对象 :</div>
<div class="a" style="left:824px;top:282px;width:172px;height:1px;background:#4d4a50"></div>
<div class="t" style="left:825px;top:289px;font-size:10px;color:#bcb9bd;letter-spacing:0.2px">分布对象 :</div>
<svg style="left:828px;top:260px" width="14" height="14"><path d="M1 0 V14" stroke="#dcdadd" stroke-width="1.2"/><rect x="3" y="2" width="6" height="4" fill="#dcdadd"/><rect x="3" y="8" width="10" height="4" fill="#dcdadd"/></svg>
<svg style="left:855px;top:260px" width="14" height="14"><path d="M7 0 V14" stroke="#dcdadd" stroke-width="1.2"/><rect x="4" y="2" width="6" height="4" fill="#dcdadd"/><rect x="2" y="8" width="10" height="4" fill="#dcdadd"/></svg>
<svg style="left:885px;top:260px" width="14" height="14"><path d="M13 0 V14" stroke="#dcdadd" stroke-width="1.2"/><rect x="5" y="2" width="6" height="4" fill="#dcdadd"/><rect x="1" y="8" width="10" height="4" fill="#dcdadd"/></svg>
<svg style="left:923px;top:260px" width="14" height="14"><path d="M0 1 H14" stroke="#dcdadd" stroke-width="1.2"/><rect x="2" y="3" width="4" height="10" fill="#dcdadd"/><rect x="8" y="3" width="4" height="6" fill="#dcdadd"/></svg>
<svg style="left:951px;top:260px" width="14" height="14"><path d="M0 7 H14" stroke="#dcdadd" stroke-width="1.2"/><rect x="2" y="2" width="4" height="10" fill="#dcdadd"/><rect x="8" y="4" width="4" height="6" fill="#dcdadd"/></svg>
<svg style="left:979px;top:260px" width="14" height="14"><path d="M0 13 H14" stroke="#dcdadd" stroke-width="1.2"/><rect x="2" y="1" width="4" height="10" fill="#dcdadd"/><rect x="8" y="5" width="4" height="6" fill="#dcdadd"/></svg>
<svg style="left:828px;top:304px" width="14" height="14"><path d="M0 1 H14 M0 8 H14" stroke="#dcdadd" stroke-width="1.2"/><rect x="3" y="3" width="8" height="3" fill="#dcdadd"/><rect x="3" y="10" width="8" height="4" fill="#dcdadd"/></svg>
<svg style="left:856px;top:304px" width="14" height="14"><path d="M0 3.5 H14 M0 10.5 H14" stroke="#dcdadd" stroke-width="1.2"/><rect x="3" y="2" width="8" height="3" fill="#dcdadd"/><rect x="3" y="9" width="8" height="3" fill="#dcdadd"/></svg>
<svg style="left:885px;top:304px" width="14" height="14"><path d="M0 6 H14 M0 13 H14" stroke="#dcdadd" stroke-width="1.2"/><rect x="3" y="1" width="8" height="4" fill="#dcdadd"/><rect x="3" y="8" width="8" height="4" fill="#dcdadd"/></svg>
<svg style="left:923px;top:304px" width="14" height="14"><path d="M1 0 V14 M8 0 V14" stroke="#dcdadd" stroke-width="1.2"/><rect x="3" y="3" width="3" height="8" fill="#dcdadd"/><rect x="10" y="3" width="4" height="8" fill="#dcdadd"/></svg>
<svg style="left:951px;top:304px" width="14" height="14"><path d="M3.5 0 V14 M10.5 0 V14" stroke="#dcdadd" stroke-width="1.2"/><rect x="2" y="3" width="3" height="8" fill="#dcdadd"/><rect x="9" y="3" width="3" height="8" fill="#dcdadd"/></svg>
<svg style="left:979px;top:304px" width="14" height="14"><path d="M6 0 V14 M13 0 V14" stroke="#dcdadd" stroke-width="1.2"/><rect x="1" y="3" width="4" height="8" fill="#dcdadd"/><rect x="8" y="3" width="3" height="8" fill="#dcdadd"/></svg>

<div class="a" style="left:820px;top:324px;width:180px;height:3px;background:#3f3c41"></div>
<!-- 图形样式 panel -->
<div class="a" style="left:820px;top:327px;width:180px;height:22px;background:#47444a"></div>
<div class="t" style="left:827px;top:333px;color:#a9a6aa">色板</div>
<div class="t" style="left:859px;top:333px;color:#a9a6aa">符号</div>
<div class="t" style="left:890px;top:333px;color:#a9a6aa">描边</div>
<div class="a" style="left:918px;top:327px;width:50px;height:22px;background:#58535a"></div>
<div class="t" style="left:924px;top:333px;color:#e4e2e5">图形样式</div>
<svg style="left:987px;top:335px" width="9" height="6"><path d="M0 0.7 H9 M0 3 H9 M0 5.3 H9" stroke="#a9a6aa" stroke-width="1.2"/></svg>
<div class="a" style="left:825px;top:354px;width:102px;height:26px;background:#dedbdf"></div>
<div class="a" style="left:850px;top:354px;width:1px;height:26px;background:#4e4a50"></div>
<div class="a" style="left:876px;top:354px;width:1px;height:26px;background:#4e4a50"></div>
<div class="a" style="left:902px;top:354px;width:1px;height:26px;background:#4e4a50"></div>
<div class="a" style="left:828px;top:358px;width:20px;height:19px;background:#fff;border:1px solid #8f8c90"></div>
<svg style="left:827px;top:369px" width="9" height="9"><rect x="0.6" y="0.6" width="5" height="5" fill="#fff" stroke="#555" stroke-width="1"/><rect x="3" y="3" width="5" height="5" fill="#fff" stroke="#111" stroke-width="1.3"/></svg>
<div class="a" style="left:855px;top:360px;width:13px;height:12px;background:#fff;box-shadow:1px 1px 1.5px #8a878b"></div>
<svg style="left:854px;top:371px" width="7" height="6"><rect x="0.6" y="0.6" width="5.6" height="4.8" rx="1.5" fill="#fff" stroke="#a03a4a" stroke-width="1.1"/><path d="M1.5 5 L5.5 1" stroke="#a03a4a" stroke-width="1"/></svg>
<div class="a" style="left:883px;top:362px;width:12.5px;height:12px;background:#fff;box-shadow:0.5px 1px 1.5px #8a878b"></div>
<svg style="left:880px;top:371px" width="7" height="6"><rect x="0.6" y="0.6" width="5.6" height="4.8" rx="1.5" fill="#fff" stroke="#a03a4a" stroke-width="1.1"/><path d="M1.5 5 L5.5 1" stroke="#a03a4a" stroke-width="1"/></svg>
<svg style="left:905px;top:357px" width="20" height="20"><rect width="20" height="20" fill="#1f4f8f"/><path d="M0 6 C3 3 7 2 12 2" stroke="#8cc8ef" stroke-width="1.6" fill="none"/><path d="M2 20 C2 12 6 6 14 4 M6 20 C6 13 10 8 17 7 M11 20 C11 15 14 11 20 11 M16 20 C16 17 18 15 20 15" stroke="#8cc8ef" stroke-width="1.5" fill="none"/><path d="M0 20 V10 C2 8 3 12 1 20Z" fill="#0d3470"/><path d="M8 14 C10 12 12 12 13 10" stroke="#0d3470" stroke-width="2" fill="none"/></svg>

<!-- icon column -->
<svg style="left:798px;top:72px" width="14" height="14"><defs><linearGradient id="gq" x1="0" x2="1"><stop offset="0" stop-color="#e8e6e9"/><stop offset="1" stop-color="#8d8a8f"/></linearGradient></defs><path d="M0.5 0.5 A13 13 0 0 1 13.5 13.5 H0.5 Z" fill="url(#gq)" stroke="#dcdadd" stroke-width="1"/></svg>
<svg style="left:797px;top:93px" width="16" height="16"><circle cx="6" cy="8.5" r="4.6" fill="none" stroke="#dcdadd" stroke-width="1.4"/><circle cx="6" cy="8.5" r="1.4" fill="#dcdadd"/><path d="M6 8.5 L13 2 M6 8.5 L13 14" stroke="#dcdadd" stroke-width="1.2"/><circle cx="13" cy="2" r="1.8" fill="#dcdadd"/><circle cx="13" cy="14" r="1.8" fill="#dcdadd"/></svg>
<div class="a" style="left:792px;top:113px;width:24px;height:1px;background:#4d494f"></div>
<svg style="left:797px;top:124px" width="16" height="16"><text x="6" y="11" font-family="Liberation Sans" font-size="12" fill="#dcdadd">A</text><rect x="1.5" y="8.5" width="4" height="4" fill="none" stroke="#dcdadd" stroke-width="1.2"/><rect x="3.5" y="10.5" width="4" height="4" fill="#58535a" stroke="#dcdadd" stroke-width="1.2"/></svg>
<svg style="left:797px;top:148px" width="16" height="14"><text x="7" y="11" font-family="Liberation Sans" font-size="12" font-weight="bold" fill="#dcdadd">¶</text><rect x="1.5" y="5.5" width="4" height="4" fill="none" stroke="#dcdadd" stroke-width="1.2"/><rect x="3.5" y="7.5" width="4" height="4" fill="#58535a" stroke="#dcdadd" stroke-width="1.2"/></svg>
<div class="a" style="left:792px;top:167px;width:24px;height:1px;background:#4d494f"></div>
<svg style="left:798px;top:179px" width="15" height="14"><path d="M6 2.5 H1 V13 H11.5 V8" fill="none" stroke="#dcdadd" stroke-width="1.4"/><path d="M5 9 L13 1 M8.5 1 H13.5 V6" fill="none" stroke="#dcdadd" stroke-width="1.4"/></svg>
<div class="a" style="left:792px;top:199px;width:24px;height:1px;background:#4d494f"></div>
<svg style="left:798px;top:213px" width="14" height="10"><defs><linearGradient id="gr" x1="0" x2="1"><stop offset="0" stop-color="#7d7a7f"/><stop offset="1" stop-color="#e8e6e9"/></linearGradient></defs><rect x="0.5" y="0.5" width="13" height="9" fill="url(#gr)" stroke="#dcdadd" stroke-width="1"/></svg>
<div class="a" style="left:792px;top:231px;width:24px;height:1px;background:#4d494f"></div>
<svg style="left:796px;top:243px" width="17" height="17"><circle cx="6.5" cy="6.5" r="5.5" fill="#a9a6aa" stroke="#dcdadd" stroke-width="1.2"/><circle cx="10" cy="10" r="5.5" fill="#79757b" stroke="#dcdadd" stroke-width="1.2"/></svg>
<div class="a" style="left:792px;top:263px;width:24px;height:1px;background:#4d494f"></div>
<div class="a" style="left:793px;top:273px;width:23px;height:19px;background:#3e3b40"></div>
<svg style="left:797px;top:277px" width="15" height="12"><path d="M7.5 0.8 C12 0.8 14.5 3.5 14.2 6 C14 8 12 8.5 10.5 8.5 C9 8.5 9 10 9 10.5 C9 11.2 8 11.5 7 11.5 C3 11.5 0.8 9 0.8 6 C0.8 3 3.5 0.8 7.5 0.8Z" fill="#e4e2e5"/><circle cx="4" cy="5" r="1.2" fill="#3e3b40"/><circle cx="7.5" cy="3.5" r="1.2" fill="#3e3b40"/><circle cx="11" cy="4.5" r="1.2" fill="#3e3b40"/><circle cx="4.5" cy="8.5" r="1.2" fill="#3e3b40"/></svg>
<div class="a" style="left:792px;top:297px;width:24px;height:1px;background:#4d494f"></div>
<svg style="left:798px;top:305px" width="15" height="19"><path d="M3 12 H12 L11 18 H4 Z" fill="#e4e2e5"/><path d="M5 12 L3 2 M7.5 12 L7.5 3 M10 12 L12 4" stroke="#dcdadd" stroke-width="1.4"/><path d="M1.5 1 L4 0 L4.5 4 Z M11 2 L14 3 L12 6Z M6.5 1 L8.5 1 L8 4Z" fill="#e4e2e5"/></svg>
<div class="a" style="left:792px;top:329px;width:24px;height:1px;background:#4d494f"></div>
<svg style="left:797px;top:338px" width="15" height="17"><path d="M7.5 0.5 L14.5 4.8 L7.5 9.1 L0.5 4.8 Z" fill="#e4e2e5"/><path d="M0.8 9.2 L7.5 13.6 L14.2 9.2" stroke="#e4e2e5" stroke-width="1.8" fill="none"/></svg>
<div class="a" style="left:792px;top:362px;width:24px;height:1px;background:#4d494f"></div>
</body></html>
